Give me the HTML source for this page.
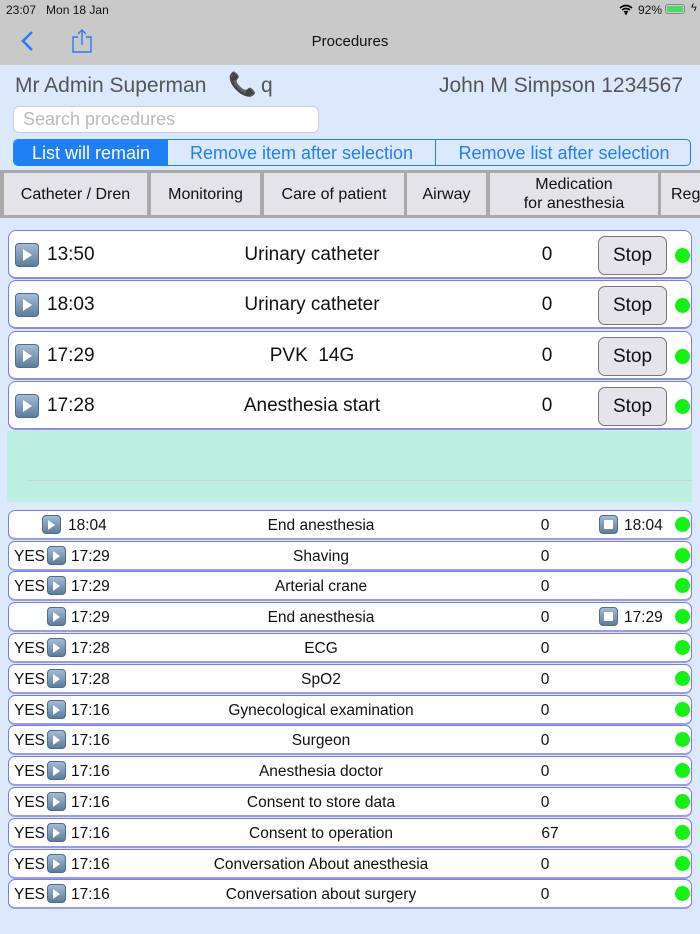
<!DOCTYPE html>
<html><head><meta charset="utf-8"><style>
*{margin:0;padding:0;box-sizing:border-box}
body{width:700px;height:934px;position:relative;overflow:hidden;background:#dce8fc;font-family:"Liberation Sans","DejaVu Sans",sans-serif;color:#111}
.a{position:absolute}
.hdr{left:0;top:0;width:700px;height:65px;background:#c9c9c9}
.cat{left:0;top:170px;width:700px;height:48px;background:#a9a9a9}
.tab{position:absolute;top:3px;height:42px;background:#e3e3e8;font-size:16px;display:flex;align-items:center;justify-content:center;text-align:center;line-height:19px}
.big{position:absolute;left:8px;width:684px;height:49px;background:#fff;border:1px solid #7b7bf0;border-bottom:2px solid #8a8ae8;border-radius:8px;font-size:19px}
.sm{position:absolute;left:8px;width:684px;height:30px;background:#fff;border:1px solid #7b7bf0;border-bottom:2px solid #9a9ae8;border-radius:7px;font-size:15.5px}
.pl{position:absolute;border-radius:4px;background:linear-gradient(#a3bbd6,#5d7c9c);border:1px solid #4f6c8a}
.pl:after{content:"";position:absolute;left:34%;top:22%;border-left:9px solid #fff;border-top:6px solid transparent;border-bottom:6px solid transparent}
.plb{width:24px;height:24px}
.pls{width:19px;height:19px}
.pls:after{border-left:7px solid #fff;border-top:5px solid transparent;border-bottom:5px solid transparent;left:32%;top:22%}
.dot{position:absolute;width:15px;height:15px;border-radius:50%;background:#14f214}
.t{position:absolute;white-space:nowrap}
.c{position:absolute;transform:translateX(-50%);white-space:nowrap}
.stop{position:absolute;left:589px;top:5px;width:69px;height:39px;border:1px solid #777;border-radius:7px;background:#e4e4ea;font-size:19px;display:flex;align-items:center;justify-content:center}
.sq{position:absolute;width:19px;height:19px;border-radius:4px;background:linear-gradient(#a3bbd6,#5d7c9c);border:1px solid #4f6c8a}
.sq:after{content:"";position:absolute;left:4px;top:4px;width:9px;height:9px;background:#fff;border-radius:1px}
</style></head><body>
<div class="a hdr"></div>
<div class="t" style="left:6px;top:3px;font-size:12px">23:07&nbsp;&nbsp;&nbsp;Mon 18 Jan</div>
<div class="t" style="left:638px;top:3px;font-size:12px">92%</div>
<svg class="a" style="left:619px;top:4px" width="14" height="11" viewBox="0 0 14 11"><path d="M1 4Q7-1 13 4M3 6Q7 3 11 6M5 8Q7 7 9 8" stroke="#000" stroke-width="1.6" fill="none"/><circle cx="7" cy="9.5" r="1.2"/></svg>
<div class="a" style="left:665px;top:4px;width:20px;height:10px;border:1px solid #888;border-radius:3px;padding:1px"><div style="width:100%;height:100%;background:#4cd964;border-radius:1px"></div></div>
<div class="t" style="left:691px;top:2px;font-size:11px">ϟ</div>
<svg class="a" style="left:20px;top:30px" width="16" height="22" viewBox="0 0 16 22"><path d="M12 2L3 11l9 9" stroke="#2a7cf6" stroke-width="2.6" fill="none"/></svg>
<svg class="a" style="left:71px;top:28px" width="22" height="26" viewBox="0 0 22 26"><path d="M7 9H2v15h18V9h-5M11 2v15M7 6l4-4 4 4" stroke="#2a7cf6" stroke-width="1.4" fill="none"/></svg>
<div class="c" style="left:350px;top:33px;font-size:15px">Procedures</div>
<div class="t" style="left:15px;top:74px;font-size:21px;color:#555">Mr Admin Superman</div>
<div class="t" style="left:228px;top:71px;font-size:23px;color:#333">📞</div>
<div class="t" style="left:261px;top:74px;font-size:21px;color:#555">q</div>
<div class="t" style="left:439px;top:74px;font-size:21px;color:#555">John M Simpson 1234567</div>
<div class="a" style="left:13px;top:106px;width:306px;height:27px;background:#fff;border:1px solid #ccd;border-radius:6px"></div>
<div class="t" style="left:23px;top:109px;font-size:18px;color:#bbb">Search procedures</div>
<div class="a" style="left:13px;top:139px;width:678px;height:27px;border:1px solid #1f80f5;border-radius:5px;overflow:hidden;font-size:18px;color:#1f80f5">
<div class="a" style="left:0;top:0;width:154px;height:27px;background:#1f80f5;color:#fff;text-align:center;line-height:26px">List will remain</div>
<div class="a" style="left:154px;top:0;width:268px;height:27px;border-right:1px solid #1f80f5;text-align:center;line-height:26px">Remove item after selection</div>
<div class="a" style="left:422px;top:0;width:256px;height:27px;text-align:center;line-height:26px">Remove list after selection</div>
</div>
<div class="a cat">
<div class="tab" style="left:4px;width:143px">Catheter / Dren</div>
<div class="tab" style="left:151px;width:109px">Monitoring</div>
<div class="tab" style="left:264px;width:140px">Care of patient</div>
<div class="tab" style="left:407px;width:79px">Airway</div>
<div class="tab" style="left:490px;width:168px">Medication<br>for anesthesia</div>
<div class="tab" style="left:661px;width:60px;justify-content:flex-start;padding-left:10px">Reg</div>
</div>
<div class="big" style="top:230px"><div class="pl plb" style="left:6px;top:12px"></div><div class="t" style="left:38px;top:13px">13:50</div><div class="c" style="left:303px;top:13px">Urinary catheter</div><div class="c" style="left:538px;top:13px">0</div><div class="stop">Stop</div><div class="dot" style="left:666px;top:17px"></div></div>
<div class="big" style="top:280px"><div class="pl plb" style="left:6px;top:12px"></div><div class="t" style="left:38px;top:13px">18:03</div><div class="c" style="left:303px;top:13px">Urinary catheter</div><div class="c" style="left:538px;top:13px">0</div><div class="stop">Stop</div><div class="dot" style="left:666px;top:17px"></div></div>
<div class="big" style="top:331px"><div class="pl plb" style="left:6px;top:12px"></div><div class="t" style="left:38px;top:13px">17:29</div><div class="c" style="left:303px;top:13px">PVK&nbsp;&nbsp;14G</div><div class="c" style="left:538px;top:13px">0</div><div class="stop">Stop</div><div class="dot" style="left:666px;top:17px"></div></div>
<div class="big" style="top:381px"><div class="pl plb" style="left:6px;top:12px"></div><div class="t" style="left:38px;top:13px">17:28</div><div class="c" style="left:303px;top:13px">Anesthesia start</div><div class="c" style="left:538px;top:13px">0</div><div class="stop">Stop</div><div class="dot" style="left:666px;top:17px"></div></div>
<div class="a" style="left:7px;top:431px;width:685px;height:71px;background:#bdefe0"></div>
<div class="a" style="left:28px;top:480px;width:664px;height:1px;background:#c8d8d0"></div>

<div class="sm" style="top:510px"><div class="pl pls" style="left:33px;top:4px"></div><div class="t" style="left:59px;top:6px">18:04</div><div class="c" style="left:312px;top:6px">End anesthesia</div><div class="c" style="left:536px;top:6px">0</div><div class="sq" style="left:590px;top:4px"></div><div class="t" style="left:615px;top:6px">18:04</div><div class="dot" style="left:666px;top:6px"></div></div>
<div class="sm" style="top:541px"><div class="t" style="left:5px;top:6px">YES</div><div class="pl pls" style="left:38px;top:4px"></div><div class="t" style="left:62px;top:6px">17:29</div><div class="c" style="left:312px;top:6px">Shaving</div><div class="c" style="left:536px;top:6px">0</div><div class="dot" style="left:666px;top:6px"></div></div>
<div class="sm" style="top:571px"><div class="t" style="left:5px;top:6px">YES</div><div class="pl pls" style="left:38px;top:4px"></div><div class="t" style="left:62px;top:6px">17:29</div><div class="c" style="left:312px;top:6px">Arterial crane</div><div class="c" style="left:536px;top:6px">0</div><div class="dot" style="left:666px;top:6px"></div></div>
<div class="sm" style="top:602px"><div class="pl pls" style="left:38px;top:4px"></div><div class="t" style="left:62px;top:6px">17:29</div><div class="c" style="left:312px;top:6px">End anesthesia</div><div class="c" style="left:536px;top:6px">0</div><div class="sq" style="left:590px;top:4px"></div><div class="t" style="left:615px;top:6px">17:29</div><div class="dot" style="left:666px;top:6px"></div></div>
<div class="sm" style="top:633px"><div class="t" style="left:5px;top:6px">YES</div><div class="pl pls" style="left:38px;top:4px"></div><div class="t" style="left:62px;top:6px">17:28</div><div class="c" style="left:312px;top:6px">ECG</div><div class="c" style="left:536px;top:6px">0</div><div class="dot" style="left:666px;top:6px"></div></div>
<div class="sm" style="top:664px"><div class="t" style="left:5px;top:6px">YES</div><div class="pl pls" style="left:38px;top:4px"></div><div class="t" style="left:62px;top:6px">17:28</div><div class="c" style="left:312px;top:6px">SpO2</div><div class="c" style="left:536px;top:6px">0</div><div class="dot" style="left:666px;top:6px"></div></div>
<div class="sm" style="top:695px"><div class="t" style="left:5px;top:6px">YES</div><div class="pl pls" style="left:38px;top:4px"></div><div class="t" style="left:62px;top:6px">17:16</div><div class="c" style="left:312px;top:6px">Gynecological examination</div><div class="c" style="left:536px;top:6px">0</div><div class="dot" style="left:666px;top:6px"></div></div>
<div class="sm" style="top:725px"><div class="t" style="left:5px;top:6px">YES</div><div class="pl pls" style="left:38px;top:4px"></div><div class="t" style="left:62px;top:6px">17:16</div><div class="c" style="left:312px;top:6px">Surgeon</div><div class="c" style="left:536px;top:6px">0</div><div class="dot" style="left:666px;top:6px"></div></div>
<div class="sm" style="top:756px"><div class="t" style="left:5px;top:6px">YES</div><div class="pl pls" style="left:38px;top:4px"></div><div class="t" style="left:62px;top:6px">17:16</div><div class="c" style="left:312px;top:6px">Anesthesia doctor</div><div class="c" style="left:536px;top:6px">0</div><div class="dot" style="left:666px;top:6px"></div></div>
<div class="sm" style="top:787px"><div class="t" style="left:5px;top:6px">YES</div><div class="pl pls" style="left:38px;top:4px"></div><div class="t" style="left:62px;top:6px">17:16</div><div class="c" style="left:312px;top:6px">Consent to store data</div><div class="c" style="left:536px;top:6px">0</div><div class="dot" style="left:666px;top:6px"></div></div>
<div class="sm" style="top:818px"><div class="t" style="left:5px;top:6px">YES</div><div class="pl pls" style="left:38px;top:4px"></div><div class="t" style="left:62px;top:6px">17:16</div><div class="c" style="left:312px;top:6px">Consent to operation</div><div class="c" style="left:541px;top:6px">67</div><div class="dot" style="left:666px;top:6px"></div></div>
<div class="sm" style="top:849px"><div class="t" style="left:5px;top:6px">YES</div><div class="pl pls" style="left:38px;top:4px"></div><div class="t" style="left:62px;top:6px">17:16</div><div class="c" style="left:312px;top:6px">Conversation About anesthesia</div><div class="c" style="left:536px;top:6px">0</div><div class="dot" style="left:666px;top:6px"></div></div>
<div class="sm" style="top:879px"><div class="t" style="left:5px;top:6px">YES</div><div class="pl pls" style="left:38px;top:4px"></div><div class="t" style="left:62px;top:6px">17:16</div><div class="c" style="left:312px;top:6px">Conversation about surgery</div><div class="c" style="left:536px;top:6px">0</div><div class="dot" style="left:666px;top:6px"></div></div>
</body></html>
